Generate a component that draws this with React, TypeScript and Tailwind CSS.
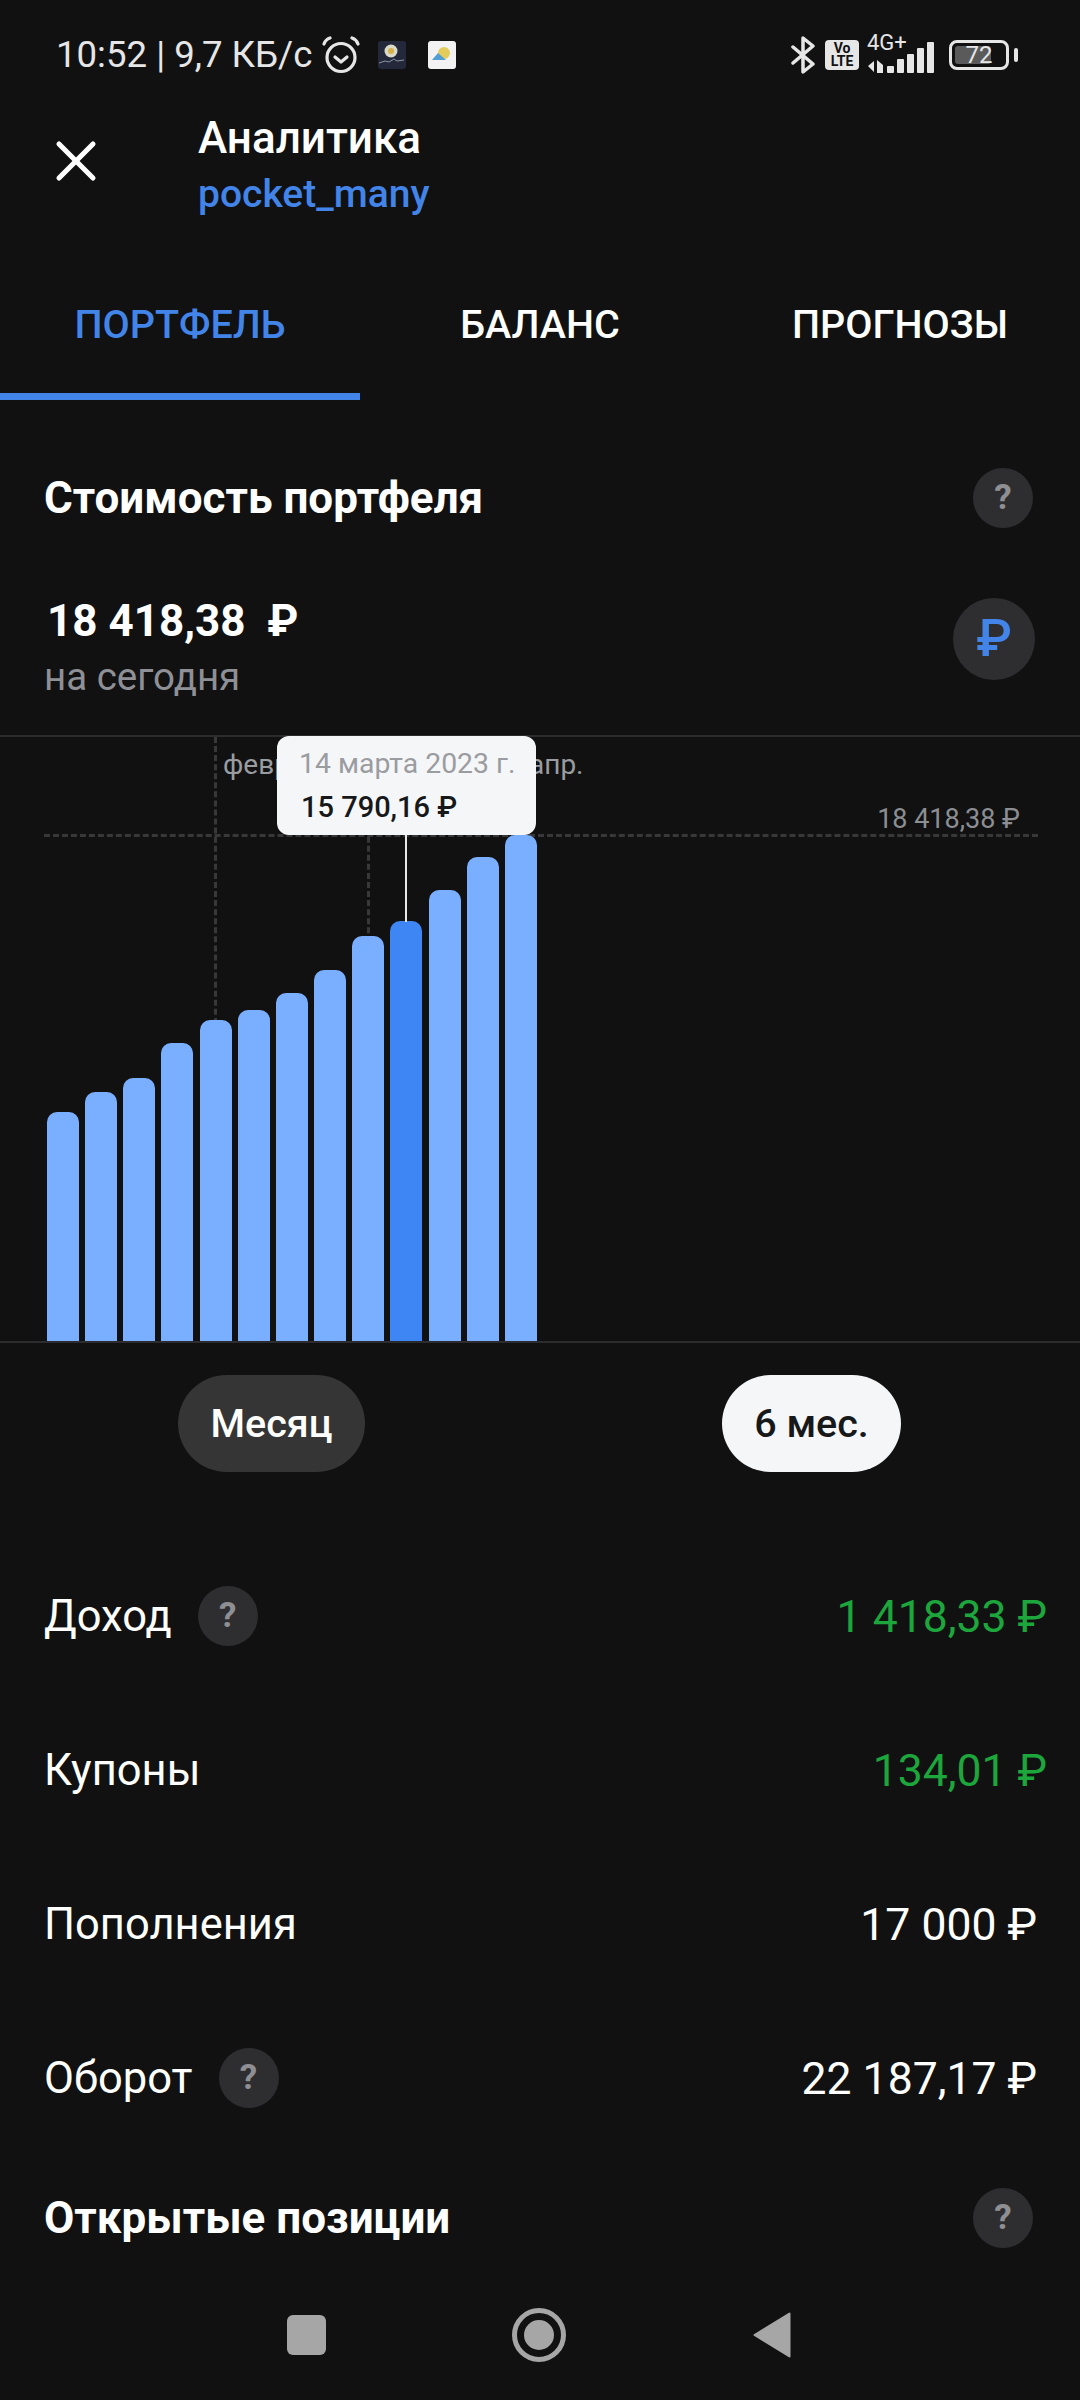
import { X } from 'lucide-react';

const bars = [229, 249, 263, 298, 321, 331, 348, 371, 405, 420, 451, 484, 506];
const SELECTED = 9;

function Help() {
  return (
    <span className="flex h-[60px] w-[60px] shrink-0 items-center justify-center rounded-full bg-[#2e2e30] text-[35px] font-bold text-[#8e8e93]">
      ?
    </span>
  );
}

function Row({ label, value, green, help }: { label: string; value: string; green?: boolean; help?: boolean }) {
  return (
    <div className="flex h-[154px] items-center justify-between pl-[44px]">
      <div className="flex items-center gap-[26px]">
        <span className="pt-[2px] text-[43.5px] text-white">{label}</span>
        {help && <Help />}
      </div>
      <span className={green ? 'pr-[33px] pt-[2px] text-[44.5px] text-[#1ca63c]' : 'pr-[43px] pt-[2px] text-[44.5px] text-white'}>{value}</span>
    </div>
  );
}

function StatusBar() {
  return (
    <div className="flex h-[110px] items-center justify-between pl-[56px] pr-[62px] text-[#e6e6e6]">
      <div className="flex items-center">
        <span className="text-[36.6px] leading-none">10:52 | 9,7 КБ/с</span>
        <svg className="ml-[10px]" width="38" height="38" viewBox="0 0 38 38" fill="none" stroke="#e6e6e6" strokeWidth="3.2" strokeLinecap="round" strokeLinejoin="round">
          <circle cx="19" cy="21.5" r="14" />
          <path d="M13 21l6 5 6-5" />
          <path d="M2 8c1-3 3-5 6-6M36 8c-1-3-3-5-6-6" />
        </svg>
        <svg className="ml-[18px]" width="28" height="28" viewBox="0 0 28 28">
          <rect width="28" height="28" rx="3" fill="#23293a" />
          <circle cx="13" cy="10" r="6.5" fill="#d9d9c8" />
          <circle cx="13" cy="10" r="3" fill="#d8b04a" />
          <path d="M1 22l6-2 4 1 5-3 3 2 7-1" stroke="#8b93a3" strokeWidth="1" fill="none" />
        </svg>
        <svg className="ml-[22px]" width="28" height="28" viewBox="0 0 28 28">
          <rect width="28" height="28" rx="3" fill="#f2f2f2" />
          <circle cx="16" cy="12" r="6" fill="#e3cc5c" />
          <path d="M4 19l6-7 8 7z" fill="#4f9fd6" />
        </svg>
      </div>
      <div className="flex items-center">
        <svg width="24" height="38" viewBox="0 0 24 38" fill="none" stroke="#e6e6e6" strokeWidth="3.5" strokeLinecap="round" strokeLinejoin="round">
          <path d="M2 11l20 17-10 8V2l10 8L2 27" />
        </svg>
        <div className="ml-[10px] flex h-[30px] w-[34px] flex-col items-center justify-center rounded-[4px] bg-[#e6e6e6] text-[14px] font-bold leading-[13px] text-[#111112]">
          <span>Vo</span>
          <span>LTE</span>
        </div>
        <div className="relative ml-[8px] h-[36px] w-[68px]">
          <span className="absolute left-0 top-[-6px] text-[22px] leading-[24px]">4G+</span>
          <svg className="absolute bottom-0 left-0" width="68" height="31" viewBox="0 0 68 31" fill="#e6e6e6">
            <path d="M1 24l6-5v11zM10 18l6 5v8h-6z" />
            <rect x="20" y="24" width="7" height="7" rx="1" />
            <rect x="30" y="17" width="7" height="14" rx="1" />
            <rect x="40" y="12" width="7" height="19" rx="1" />
            <rect x="50" y="6" width="7" height="25" rx="1" />
            <rect x="60" y="0" width="7" height="31" rx="1" />
          </svg>
        </div>
        <div className="relative ml-[14px] flex h-[30px] w-[60px] items-center rounded-[8px] border-[3px] border-[#e6e6e6] p-[3px]">
          <div className="h-full w-[36px] rounded-[3px] bg-[#5a5a5a]" />
          <span className="absolute inset-0 flex items-center justify-center text-[24px] leading-none">72</span>
        </div>
        <div className="ml-[5px] h-[14px] w-[4px] rounded-[2px] bg-[#e6e6e6]" />
      </div>
    </div>
  );
}

function Chart() {
  return (
    <div className="relative h-[608px] border-y-2 border-[#2c2c2e]">
      {/* axis grid */}
      <div className="absolute bottom-0 left-[214px] top-0 border-l-[3px] border-dashed border-[#38383a]" />
      <div className="absolute bottom-0 left-[367px] top-0 border-l-[3px] border-dashed border-[#38383a]" />
      <div className="absolute left-[44px] right-[42px] top-[97px] border-t-[3px] border-dashed border-[#38383a]" />
      <span className="absolute left-[223px] top-[8px] text-[28px] leading-[40px] text-[#9a9ca0]">февр.</span>
      <span className="absolute left-[529px] top-[8px] text-[28px] leading-[40px] text-[#9a9ca0]">апр.</span>
      <span className="absolute right-[60px] top-[62px] text-[27px] leading-[40px] text-[#8c8e92]">18 418,38 ₽</span>

      <div className="absolute bottom-0 left-[47px] flex items-end gap-[6.17px]">
        {bars.map((h, i) => (
          <div
            key={i}
            className={i === SELECTED ? 'w-[32px] rounded-t-[10px] bg-[#3f86f5]' : 'w-[32px] rounded-t-[10px] bg-[#7aaeff]'}
            style={{ height: h }}
          />
        ))}
      </div>

      {/* tooltip */}
      <div className="absolute left-[405px] top-[97px] h-[88px] w-[2px] bg-[#e8e8e8]" />
      <div className="absolute left-[277px] top-[-1px] flex h-[99px] w-[259px] flex-col rounded-[12px] bg-[#f5f6f8] pl-[22px] pt-[7px]">
        <span className="text-[28.4px] leading-[42px] text-[#9a9ca0]">14 марта 2023 г.</span>
        <span className="pl-[2px] text-[29px] font-medium leading-[44px] text-[#17181a]">15 790,16 ₽</span>
      </div>
    </div>
  );
}

export default function App() {
  return (
    <div className="relative flex h-[2400px] w-[1080px] flex-col overflow-hidden bg-[#111112] font-['Roboto',sans-serif]">
      <StatusBar />

      <div className="flex h-[130px] items-start pl-[42px]">
        <X className="mt-[17px] h-[68px] w-[68px] text-white" strokeWidth={1.8} />
        <div className="ml-[88px] flex flex-col">
          <span className="text-[44px] font-medium leading-[56px] text-white">Аналитика</span>
          <span className="text-[39px] font-medium leading-[56px] text-[#4284e8]">pocket_many</span>
        </div>
      </div>

      <div className="flex h-[160px] items-start pt-[60px]">
        {['ПОРТФЕЛЬ', 'БАЛАНС', 'ПРОГНОЗЫ'].map((t, i) => (
          <div key={t} className="relative flex h-[100px] w-[360px] justify-center">
            <span className={i === 0 ? 'text-[39.5px] font-medium leading-[50px] text-[#4284e8]' : 'text-[39.5px] font-medium leading-[50px] text-white'}>{t}</span>
            {i === 0 && <div className="absolute bottom-0 left-0 h-[7px] w-full bg-[#4284e8]" />}
          </div>
        ))}
      </div>

      <div className="flex h-[196px] items-center justify-between pl-[44px] pr-[47px]">
        <span className="text-[44px] font-bold text-white">Стоимость портфеля</span>
        <Help />
      </div>

      <div className="flex h-[139px] items-start justify-between pl-[44px] pr-[45px]">
        <div className="flex flex-col">
          <span className="whitespace-pre pl-[3px] text-[44px] font-bold leading-[50px] text-white">18 418,38  ₽</span>
          <span className="text-[38.5px] leading-[62px] text-[#8e9096]">на сегодня</span>
        </div>
        <span className="mt-[2px] flex h-[82px] w-[82px] items-center justify-center rounded-full bg-[#2e2e30] text-[52px] font-medium text-[#4284e8]">₽</span>
      </div>

      <Chart />

      <div className="flex h-[196px] items-start pt-[32px]">
        <div className="ml-[178px] flex h-[97px] w-[187px] items-center justify-center rounded-full bg-[#353536] text-[39.5px] font-medium text-white">Месяц</div>
        <div className="ml-[357px] flex h-[97px] w-[179px] items-center justify-center rounded-full bg-[#f5f6f8] text-[39.5px] font-medium text-[#17181a]">6 мес.</div>
      </div>

      <Row label="Доход" value="1 418,33 ₽" green help />
      <Row label="Купоны" value="134,01 ₽" green />
      <Row label="Пополнения" value="17 000 ₽" />
      <Row label="Оборот" value="22 187,17 ₽" help />

      <div className="flex h-[126px] items-center justify-between pl-[44px] pr-[47px]">
        <span className="text-[44px] font-bold text-white">Открытые позиции</span>
        <Help />
      </div>

      {/* nav bar */}
      <div className="flex flex-1 items-center pb-[12px]">
        <div className="ml-[287px] h-[40px] w-[39px] rounded-[6px] bg-[#a6a6a6]" />
        <div className="ml-[186px] flex h-[54px] w-[54px] items-center justify-center rounded-full border-[5px] border-[#a6a6a6]">
          <div className="h-[30px] w-[30px] rounded-full bg-[#a6a6a6]" />
        </div>
        <svg className="ml-[187px]" width="38" height="46" viewBox="0 0 38 46" fill="#a6a6a6" stroke="#a6a6a6" strokeWidth="2" strokeLinejoin="round">
          <path d="M1.5 23L36.5 1.5v43z" />
        </svg>
      </div>
    </div>
  );
}
